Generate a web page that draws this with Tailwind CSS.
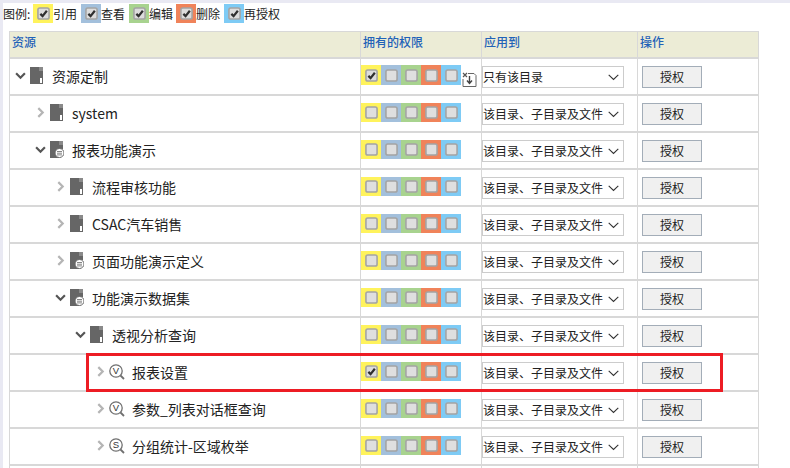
<!DOCTYPE html>
<html lang="zh">
<head>
<meta charset="utf-8">
<script src="https://cdn.jsdelivr.net/npm/@tailwindcss/browser@4"></script>
</head>
<body class="w-[790px] h-[468px] overflow-hidden bg-white text-[#222] font-['Noto_Sans_CJK_SC','Noto_Sans',sans-serif]">
<svg class="hidden">
  <symbol id="chk" viewBox="0 0 14 14"><rect x="1" y="1" width="12" height="12" rx="2" fill="#dfdfdf" stroke="#a4a4a4" stroke-width="1.7"/></symbol>
  <symbol id="chkon" viewBox="0 0 14 14"><rect x="1" y="1" width="12" height="12" rx="2" fill="#dcdcdc" stroke="#a4a4a4" stroke-width="1.7"/><path d="M3.600 7.400 6 9.800 10.600 4" fill="none" stroke="#2f2f2f" stroke-width="2.400"/></symbol>
  <symbol id="down" viewBox="0 0 10 10"><path d="M1 3l4 4 4-4" fill="none" stroke="#555" stroke-width="2"/></symbol>
  <symbol id="right" viewBox="0 0 10 10"><path d="M3 1l4 4-4 4" fill="none" stroke="#b5b5b5" stroke-width="2"/></symbol>
  <symbol id="sel" viewBox="0 0 11 7"><path d="M.7 .8 5.500 5.500 10.300 .8" fill="none" stroke="#333" stroke-width="1.100"/></symbol>
  <symbol id="fa" viewBox="0 0 14 17"><path d="M0 0h9v17H0z" fill="#666"/><path d="M9 0h4v4H9z" fill="#8a8a8a"/><path d="M9 4h4v6H9z" fill="#666"/><rect x="9.500" y="10.500" width="3" height="6" fill="#fff" stroke="#666"/></symbol>
  <symbol id="fb" viewBox="0 0 14 17"><path d="M0 0h9v17H0z" fill="#666"/><path d="M9 0h4v4H9z" fill="#8a8a8a"/><path d="M9 4h4v4H9z" fill="#666"/><circle cx="9.500" cy="12" r="4.500" fill="#fff" stroke="#666"/><path d="M7 10.500h5M7 12.200h5M7 13.900h5" stroke="#666" stroke-width=".8"/></symbol>
  <symbol id="qv" viewBox="0 0 16 16"><circle cx="7" cy="7" r="6.200" fill="#fff" stroke="#707070" stroke-width="1.300"/><path d="M11.500 11.500 15 15" stroke="#707070" stroke-width="1.800"/><text x="7" y="10.300" text-anchor="middle" font-size="9.500" font-family="Liberation Sans" fill="#333">V</text></symbol>
  <symbol id="qs" viewBox="0 0 16 16"><circle cx="7" cy="7" r="6.200" fill="#fff" stroke="#707070" stroke-width="1.300"/><path d="M11.500 11.500 15 15" stroke="#707070" stroke-width="1.800"/><text x="7" y="10.300" text-anchor="middle" font-size="9.500" font-family="Liberation Sans" fill="#333">S</text></symbol>
</svg>

<div class="relative h-[468px] overflow-hidden border-l-[3px] border-t-[3px] border-[#e9e9f3]">
  <div class="h-[28px] flex items-center text-xs pl-0 -mt-[3px] -ml-[3px] pb-[1px]">
    <span class="w-[33px] pl-[3px]">图例:</span>
    <span class="w-[20px] h-[19px] bg-[#fff35c] flex items-center justify-center"><svg class="w-[13px] h-[13px]"><use href="#chkon"/></svg></span><span class="w-[28px]">引用</span>
    <span class="w-[20px] h-[19px] bg-[#a3c0dc] flex items-center justify-center"><svg class="w-[13px] h-[13px]"><use href="#chkon"/></svg></span><span class="w-[28px]">查看</span>
    <span class="w-[20px] h-[19px] bg-[#a8d38f] flex items-center justify-center"><svg class="w-[13px] h-[13px]"><use href="#chkon"/></svg></span><span class="w-[27px]">编辑</span>
    <span class="w-[20px] h-[19px] bg-[#f0835a] flex items-center justify-center"><svg class="w-[13px] h-[13px]"><use href="#chkon"/></svg></span><span class="w-[28px]">删除</span>
    <span class="w-[20px] h-[19px] bg-[#7ecbf5] flex items-center justify-center"><svg class="w-[13px] h-[13px]"><use href="#chkon"/></svg></span><span>再授权</span>
  </div>

  <div class="ml-[6px] mt-[3px] w-[750px] border-l border-r border-t border-[#d8d8d8]">
    <div class="grid grid-cols-[350px_121px_156px_121px] h-[27px] bg-[#ececd6] text-xs font-medium text-[#1f62b8] border-b-2 border-[#d8d8d8]">
      <div class="pl-[2px] pt-[2px]">资源</div>
      <div class="pl-[2px] pt-[2px] border-l border-[#d8d8d8]">拥有的权限</div>
      <div class="pl-[2px] pt-[2px] border-l border-[#d8d8d8]">应用到</div>
      <div class="pl-[2px] pt-[2px] border-l border-[#d8d8d8]">操作</div>
    </div>

    <div class="grid grid-cols-[350px_121px_156px_121px] h-[37px] border-b-2 border-[#d8d8d8]">
      <div class="flex items-center text-sm pl-[5px] pb-[2px]"><svg class="w-[11px] h-[11px] mr-[4px]"><use href="#down"/></svg><svg class="w-[14px] h-[17px] mr-[8px]"><use href="#fa"/></svg>资源定制</div>
      <div class="relative border-l border-[#d8d8d8] flex items-start pt-[6px]">
        <span class="w-[20px] h-[20px] bg-[#fff35c] flex items-center justify-center"><svg class="w-[13px] h-[13px]"><use href="#chkon"/></svg></span><span class="w-[20px] h-[20px] bg-[#a3c0dc] flex items-center justify-center"><svg class="w-[13px] h-[13px]"><use href="#chk"/></svg></span><span class="w-[20px] h-[20px] bg-[#a8d38f] flex items-center justify-center"><svg class="w-[13px] h-[13px]"><use href="#chk"/></svg></span><span class="w-[20px] h-[20px] bg-[#f0835a] flex items-center justify-center"><svg class="w-[13px] h-[13px]"><use href="#chk"/></svg></span><span class="w-[20px] h-[20px] bg-[#7ecbf5] flex items-center justify-center"><svg class="w-[13px] h-[13px]"><use href="#chk"/></svg></span>
        <svg class="absolute left-[101px] top-[13px] w-[15px] h-[15px]" viewBox="0 0 15 15"><path d="M6 1.500h6l2 2v11H1V7" fill="none" stroke="#666"/><path d="M1 1l4 4M5 1 1 5" stroke="#555" stroke-width="1.200"/><path d="M7.500 4v7M5 8.500l2.500 3 2.500-3" fill="none" stroke="#444" stroke-width="1.400"/></svg>
      </div>
      <div class="border-l border-[#d8d8d8] pt-[7px]"><div class="w-[142px] h-[22px] border border-[#ccc] flex items-center justify-between text-xs pl-0 pr-[4px]"><span>只有该目录</span><svg class="w-[11px] h-[7px]"><use href="#sel"/></svg></div></div>
      <div class="border-l border-[#d8d8d8] pt-[7px] pl-[4px]"><div class="w-[60px] h-[22px] border border-[#a3adb8] bg-[#f0f0f0] flex items-center justify-center text-xs">授权</div></div>
    </div>

    <div class="grid grid-cols-[350px_121px_156px_121px] h-[37px] border-b-2 border-[#d8d8d8]">
      <div class="flex items-center text-sm pl-[25px] pb-[2px]"><svg class="w-[11px] h-[11px] mr-[4px]"><use href="#right"/></svg><svg class="w-[14px] h-[17px] mr-[8px]"><use href="#fa"/></svg>system</div>
      <div class="border-l border-[#d8d8d8] flex items-start pt-[7px]">
        <span class="w-[20px] h-[19px] bg-[#fff35c] flex items-center justify-center"><svg class="w-[13px] h-[13px]"><use href="#chk"/></svg></span><span class="w-[20px] h-[19px] bg-[#a3c0dc] flex items-center justify-center"><svg class="w-[13px] h-[13px]"><use href="#chk"/></svg></span><span class="w-[20px] h-[19px] bg-[#a8d38f] flex items-center justify-center"><svg class="w-[13px] h-[13px]"><use href="#chk"/></svg></span><span class="w-[20px] h-[19px] bg-[#f0835a] flex items-center justify-center"><svg class="w-[13px] h-[13px]"><use href="#chk"/></svg></span><span class="w-[20px] h-[19px] bg-[#7ecbf5] flex items-center justify-center"><svg class="w-[13px] h-[13px]"><use href="#chk"/></svg></span>
      </div>
      <div class="border-l border-[#d8d8d8] pt-[7px]"><div class="w-[142px] h-[22px] border border-[#ccc] flex items-center justify-between text-xs pl-0 pr-[4px]"><span>该目录、子目录及文件</span><svg class="w-[11px] h-[7px]"><use href="#sel"/></svg></div></div>
      <div class="border-l border-[#d8d8d8] pt-[7px] pl-[4px]"><div class="w-[60px] h-[22px] border border-[#a3adb8] bg-[#f0f0f0] flex items-center justify-center text-xs">授权</div></div>
    </div>

    <div class="grid grid-cols-[350px_121px_156px_121px] h-[37px] border-b-2 border-[#d8d8d8]">
      <div class="flex items-center text-sm pl-[25px] pb-[2px]"><svg class="w-[11px] h-[11px] mr-[4px]"><use href="#down"/></svg><svg class="w-[14px] h-[17px] mr-[8px]"><use href="#fb"/></svg>报表功能演示</div>
      <div class="border-l border-[#d8d8d8] flex items-start pt-[7px]">
        <span class="w-[20px] h-[19px] bg-[#fff35c] flex items-center justify-center"><svg class="w-[13px] h-[13px]"><use href="#chk"/></svg></span><span class="w-[20px] h-[19px] bg-[#a3c0dc] flex items-center justify-center"><svg class="w-[13px] h-[13px]"><use href="#chk"/></svg></span><span class="w-[20px] h-[19px] bg-[#a8d38f] flex items-center justify-center"><svg class="w-[13px] h-[13px]"><use href="#chk"/></svg></span><span class="w-[20px] h-[19px] bg-[#f0835a] flex items-center justify-center"><svg class="w-[13px] h-[13px]"><use href="#chk"/></svg></span><span class="w-[20px] h-[19px] bg-[#7ecbf5] flex items-center justify-center"><svg class="w-[13px] h-[13px]"><use href="#chk"/></svg></span>
      </div>
      <div class="border-l border-[#d8d8d8] pt-[7px]"><div class="w-[142px] h-[22px] border border-[#ccc] flex items-center justify-between text-xs pl-0 pr-[4px]"><span>该目录、子目录及文件</span><svg class="w-[11px] h-[7px]"><use href="#sel"/></svg></div></div>
      <div class="border-l border-[#d8d8d8] pt-[7px] pl-[4px]"><div class="w-[60px] h-[22px] border border-[#a3adb8] bg-[#f0f0f0] flex items-center justify-center text-xs">授权</div></div>
    </div>

    <div class="grid grid-cols-[350px_121px_156px_121px] h-[37px] border-b-2 border-[#d8d8d8]">
      <div class="flex items-center text-sm pl-[45px] pb-[2px]"><svg class="w-[11px] h-[11px] mr-[4px]"><use href="#right"/></svg><svg class="w-[14px] h-[17px] mr-[8px]"><use href="#fa"/></svg>流程审核功能</div>
      <div class="border-l border-[#d8d8d8] flex items-start pt-[7px]">
        <span class="w-[20px] h-[19px] bg-[#fff35c] flex items-center justify-center"><svg class="w-[13px] h-[13px]"><use href="#chk"/></svg></span><span class="w-[20px] h-[19px] bg-[#a3c0dc] flex items-center justify-center"><svg class="w-[13px] h-[13px]"><use href="#chk"/></svg></span><span class="w-[20px] h-[19px] bg-[#a8d38f] flex items-center justify-center"><svg class="w-[13px] h-[13px]"><use href="#chk"/></svg></span><span class="w-[20px] h-[19px] bg-[#f0835a] flex items-center justify-center"><svg class="w-[13px] h-[13px]"><use href="#chk"/></svg></span><span class="w-[20px] h-[19px] bg-[#7ecbf5] flex items-center justify-center"><svg class="w-[13px] h-[13px]"><use href="#chk"/></svg></span>
      </div>
      <div class="border-l border-[#d8d8d8] pt-[7px]"><div class="w-[142px] h-[22px] border border-[#ccc] flex items-center justify-between text-xs pl-0 pr-[4px]"><span>该目录、子目录及文件</span><svg class="w-[11px] h-[7px]"><use href="#sel"/></svg></div></div>
      <div class="border-l border-[#d8d8d8] pt-[7px] pl-[4px]"><div class="w-[60px] h-[22px] border border-[#a3adb8] bg-[#f0f0f0] flex items-center justify-center text-xs">授权</div></div>
    </div>

    <div class="grid grid-cols-[350px_121px_156px_121px] h-[37px] border-b-2 border-[#d8d8d8]">
      <div class="flex items-center text-sm pl-[45px] pb-[2px]"><svg class="w-[11px] h-[11px] mr-[4px]"><use href="#right"/></svg><svg class="w-[14px] h-[17px] mr-[8px]"><use href="#fa"/></svg>CSAC汽车销售</div>
      <div class="border-l border-[#d8d8d8] flex items-start pt-[7px]">
        <span class="w-[20px] h-[19px] bg-[#fff35c] flex items-center justify-center"><svg class="w-[13px] h-[13px]"><use href="#chk"/></svg></span><span class="w-[20px] h-[19px] bg-[#a3c0dc] flex items-center justify-center"><svg class="w-[13px] h-[13px]"><use href="#chk"/></svg></span><span class="w-[20px] h-[19px] bg-[#a8d38f] flex items-center justify-center"><svg class="w-[13px] h-[13px]"><use href="#chk"/></svg></span><span class="w-[20px] h-[19px] bg-[#f0835a] flex items-center justify-center"><svg class="w-[13px] h-[13px]"><use href="#chk"/></svg></span><span class="w-[20px] h-[19px] bg-[#7ecbf5] flex items-center justify-center"><svg class="w-[13px] h-[13px]"><use href="#chk"/></svg></span>
      </div>
      <div class="border-l border-[#d8d8d8] pt-[7px]"><div class="w-[142px] h-[22px] border border-[#ccc] flex items-center justify-between text-xs pl-0 pr-[4px]"><span>该目录、子目录及文件</span><svg class="w-[11px] h-[7px]"><use href="#sel"/></svg></div></div>
      <div class="border-l border-[#d8d8d8] pt-[7px] pl-[4px]"><div class="w-[60px] h-[22px] border border-[#a3adb8] bg-[#f0f0f0] flex items-center justify-center text-xs">授权</div></div>
    </div>

    <div class="grid grid-cols-[350px_121px_156px_121px] h-[37px] border-b-2 border-[#d8d8d8]">
      <div class="flex items-center text-sm pl-[45px] pb-[2px]"><svg class="w-[11px] h-[11px] mr-[4px]"><use href="#right"/></svg><svg class="w-[14px] h-[17px] mr-[8px]"><use href="#fb"/></svg>页面功能演示定义</div>
      <div class="border-l border-[#d8d8d8] flex items-start pt-[7px]">
        <span class="w-[20px] h-[19px] bg-[#fff35c] flex items-center justify-center"><svg class="w-[13px] h-[13px]"><use href="#chk"/></svg></span><span class="w-[20px] h-[19px] bg-[#a3c0dc] flex items-center justify-center"><svg class="w-[13px] h-[13px]"><use href="#chk"/></svg></span><span class="w-[20px] h-[19px] bg-[#a8d38f] flex items-center justify-center"><svg class="w-[13px] h-[13px]"><use href="#chk"/></svg></span><span class="w-[20px] h-[19px] bg-[#f0835a] flex items-center justify-center"><svg class="w-[13px] h-[13px]"><use href="#chk"/></svg></span><span class="w-[20px] h-[19px] bg-[#7ecbf5] flex items-center justify-center"><svg class="w-[13px] h-[13px]"><use href="#chk"/></svg></span>
      </div>
      <div class="border-l border-[#d8d8d8] pt-[7px]"><div class="w-[142px] h-[22px] border border-[#ccc] flex items-center justify-between text-xs pl-0 pr-[4px]"><span>该目录、子目录及文件</span><svg class="w-[11px] h-[7px]"><use href="#sel"/></svg></div></div>
      <div class="border-l border-[#d8d8d8] pt-[7px] pl-[4px]"><div class="w-[60px] h-[22px] border border-[#a3adb8] bg-[#f0f0f0] flex items-center justify-center text-xs">授权</div></div>
    </div>

    <div class="grid grid-cols-[350px_121px_156px_121px] h-[37px] border-b-2 border-[#d8d8d8]">
      <div class="flex items-center text-sm pl-[45px] pb-[2px]"><svg class="w-[11px] h-[11px] mr-[4px]"><use href="#down"/></svg><svg class="w-[14px] h-[17px] mr-[8px]"><use href="#fb"/></svg>功能演示数据集</div>
      <div class="border-l border-[#d8d8d8] flex items-start pt-[7px]">
        <span class="w-[20px] h-[19px] bg-[#fff35c] flex items-center justify-center"><svg class="w-[13px] h-[13px]"><use href="#chk"/></svg></span><span class="w-[20px] h-[19px] bg-[#a3c0dc] flex items-center justify-center"><svg class="w-[13px] h-[13px]"><use href="#chk"/></svg></span><span class="w-[20px] h-[19px] bg-[#a8d38f] flex items-center justify-center"><svg class="w-[13px] h-[13px]"><use href="#chk"/></svg></span><span class="w-[20px] h-[19px] bg-[#f0835a] flex items-center justify-center"><svg class="w-[13px] h-[13px]"><use href="#chk"/></svg></span><span class="w-[20px] h-[19px] bg-[#7ecbf5] flex items-center justify-center"><svg class="w-[13px] h-[13px]"><use href="#chk"/></svg></span>
      </div>
      <div class="border-l border-[#d8d8d8] pt-[7px]"><div class="w-[142px] h-[22px] border border-[#ccc] flex items-center justify-between text-xs pl-0 pr-[4px]"><span>该目录、子目录及文件</span><svg class="w-[11px] h-[7px]"><use href="#sel"/></svg></div></div>
      <div class="border-l border-[#d8d8d8] pt-[7px] pl-[4px]"><div class="w-[60px] h-[22px] border border-[#a3adb8] bg-[#f0f0f0] flex items-center justify-center text-xs">授权</div></div>
    </div>

    <div class="grid grid-cols-[350px_121px_156px_121px] h-[37px] border-b-2 border-[#d8d8d8]">
      <div class="flex items-center text-sm pl-[65px] pb-[2px]"><svg class="w-[11px] h-[11px] mr-[4px]"><use href="#down"/></svg><svg class="w-[14px] h-[17px] mr-[8px]"><use href="#fa"/></svg>透视分析查询</div>
      <div class="border-l border-[#d8d8d8] flex items-start pt-[7px]">
        <span class="w-[20px] h-[19px] bg-[#fff35c] flex items-center justify-center"><svg class="w-[13px] h-[13px]"><use href="#chk"/></svg></span><span class="w-[20px] h-[19px] bg-[#a3c0dc] flex items-center justify-center"><svg class="w-[13px] h-[13px]"><use href="#chk"/></svg></span><span class="w-[20px] h-[19px] bg-[#a8d38f] flex items-center justify-center"><svg class="w-[13px] h-[13px]"><use href="#chk"/></svg></span><span class="w-[20px] h-[19px] bg-[#f0835a] flex items-center justify-center"><svg class="w-[13px] h-[13px]"><use href="#chk"/></svg></span><span class="w-[20px] h-[19px] bg-[#7ecbf5] flex items-center justify-center"><svg class="w-[13px] h-[13px]"><use href="#chk"/></svg></span>
      </div>
      <div class="border-l border-[#d8d8d8] pt-[7px]"><div class="w-[142px] h-[22px] border border-[#ccc] flex items-center justify-between text-xs pl-0 pr-[4px]"><span>该目录、子目录及文件</span><svg class="w-[11px] h-[7px]"><use href="#sel"/></svg></div></div>
      <div class="border-l border-[#d8d8d8] pt-[7px] pl-[4px]"><div class="w-[60px] h-[22px] border border-[#a3adb8] bg-[#f0f0f0] flex items-center justify-center text-xs">授权</div></div>
    </div>

    <div class="grid grid-cols-[350px_121px_156px_121px] h-[37px] border-b-2 border-[#d8d8d8]">
      <div class="flex items-center text-sm pl-[85px] pb-[2px]"><svg class="w-[11px] h-[11px] mr-[3px]"><use href="#right"/></svg><svg class="w-[16px] h-[16px] mr-[7px]"><use href="#qv"/></svg>报表设置</div>
      <div class="border-l border-[#d8d8d8] flex items-start pt-[7px]">
        <span class="w-[20px] h-[19px] bg-[#fff35c] flex items-center justify-center"><svg class="w-[13px] h-[13px]"><use href="#chkon"/></svg></span><span class="w-[20px] h-[19px] bg-[#a3c0dc] flex items-center justify-center"><svg class="w-[13px] h-[13px]"><use href="#chk"/></svg></span><span class="w-[20px] h-[19px] bg-[#a8d38f] flex items-center justify-center"><svg class="w-[13px] h-[13px]"><use href="#chk"/></svg></span><span class="w-[20px] h-[19px] bg-[#f0835a] flex items-center justify-center"><svg class="w-[13px] h-[13px]"><use href="#chk"/></svg></span><span class="w-[20px] h-[19px] bg-[#7ecbf5] flex items-center justify-center"><svg class="w-[13px] h-[13px]"><use href="#chk"/></svg></span>
      </div>
      <div class="border-l border-[#d8d8d8] pt-[7px]"><div class="w-[142px] h-[22px] border border-[#ccc] flex items-center justify-between text-xs pl-0 pr-[4px]"><span>该目录、子目录及文件</span><svg class="w-[11px] h-[7px]"><use href="#sel"/></svg></div></div>
      <div class="border-l border-[#d8d8d8] pt-[7px] pl-[4px]"><div class="w-[60px] h-[22px] border border-[#a3adb8] bg-[#f0f0f0] flex items-center justify-center text-xs">授权</div></div>
    </div>

    <div class="grid grid-cols-[350px_121px_156px_121px] h-[37px] border-b-2 border-[#d8d8d8]">
      <div class="flex items-center text-sm pl-[85px] pb-[2px]"><svg class="w-[11px] h-[11px] mr-[3px]"><use href="#right"/></svg><svg class="w-[16px] h-[16px] mr-[7px]"><use href="#qv"/></svg>参数_列表对话框查询</div>
      <div class="border-l border-[#d8d8d8] flex items-start pt-[7px]">
        <span class="w-[20px] h-[19px] bg-[#fff35c] flex items-center justify-center"><svg class="w-[13px] h-[13px]"><use href="#chk"/></svg></span><span class="w-[20px] h-[19px] bg-[#a3c0dc] flex items-center justify-center"><svg class="w-[13px] h-[13px]"><use href="#chk"/></svg></span><span class="w-[20px] h-[19px] bg-[#a8d38f] flex items-center justify-center"><svg class="w-[13px] h-[13px]"><use href="#chk"/></svg></span><span class="w-[20px] h-[19px] bg-[#f0835a] flex items-center justify-center"><svg class="w-[13px] h-[13px]"><use href="#chk"/></svg></span><span class="w-[20px] h-[19px] bg-[#7ecbf5] flex items-center justify-center"><svg class="w-[13px] h-[13px]"><use href="#chk"/></svg></span>
      </div>
      <div class="border-l border-[#d8d8d8] pt-[7px]"><div class="w-[142px] h-[22px] border border-[#ccc] flex items-center justify-between text-xs pl-0 pr-[4px]"><span>该目录、子目录及文件</span><svg class="w-[11px] h-[7px]"><use href="#sel"/></svg></div></div>
      <div class="border-l border-[#d8d8d8] pt-[7px] pl-[4px]"><div class="w-[60px] h-[22px] border border-[#a3adb8] bg-[#f0f0f0] flex items-center justify-center text-xs">授权</div></div>
    </div>

    <div class="grid grid-cols-[350px_121px_156px_121px] h-[37px] border-b-2 border-[#d8d8d8]">
      <div class="flex items-center text-sm pl-[85px] pb-[2px]"><svg class="w-[11px] h-[11px] mr-[3px]"><use href="#right"/></svg><svg class="w-[16px] h-[16px] mr-[7px]"><use href="#qs"/></svg>分组统计-区域枚举</div>
      <div class="border-l border-[#d8d8d8] flex items-start pt-[7px]">
        <span class="w-[20px] h-[19px] bg-[#fff35c] flex items-center justify-center"><svg class="w-[13px] h-[13px]"><use href="#chk"/></svg></span><span class="w-[20px] h-[19px] bg-[#a3c0dc] flex items-center justify-center"><svg class="w-[13px] h-[13px]"><use href="#chk"/></svg></span><span class="w-[20px] h-[19px] bg-[#a8d38f] flex items-center justify-center"><svg class="w-[13px] h-[13px]"><use href="#chk"/></svg></span><span class="w-[20px] h-[19px] bg-[#f0835a] flex items-center justify-center"><svg class="w-[13px] h-[13px]"><use href="#chk"/></svg></span><span class="w-[20px] h-[19px] bg-[#7ecbf5] flex items-center justify-center"><svg class="w-[13px] h-[13px]"><use href="#chk"/></svg></span>
      </div>
      <div class="border-l border-[#d8d8d8] pt-[7px]"><div class="w-[142px] h-[22px] border border-[#ccc] flex items-center justify-between text-xs pl-0 pr-[4px]"><span>该目录、子目录及文件</span><svg class="w-[11px] h-[7px]"><use href="#sel"/></svg></div></div>
      <div class="border-l border-[#d8d8d8] pt-[7px] pl-[4px]"><div class="w-[60px] h-[22px] border border-[#a3adb8] bg-[#f0f0f0] flex items-center justify-center text-xs">授权</div></div>
    </div>

    <div class="grid grid-cols-[350px_121px_156px_121px] h-[2px]">
      <div></div><div class="border-l border-[#d8d8d8]"></div><div class="border-l border-[#d8d8d8]"></div><div class="border-l border-[#d8d8d8]"></div>
    </div>
  </div>

  <div class="absolute left-[83px] top-[350px] w-[637px] h-[39px] border-[3px] border-[#ed1c24] pointer-events-none"></div>
</div>
</body>
</html>
